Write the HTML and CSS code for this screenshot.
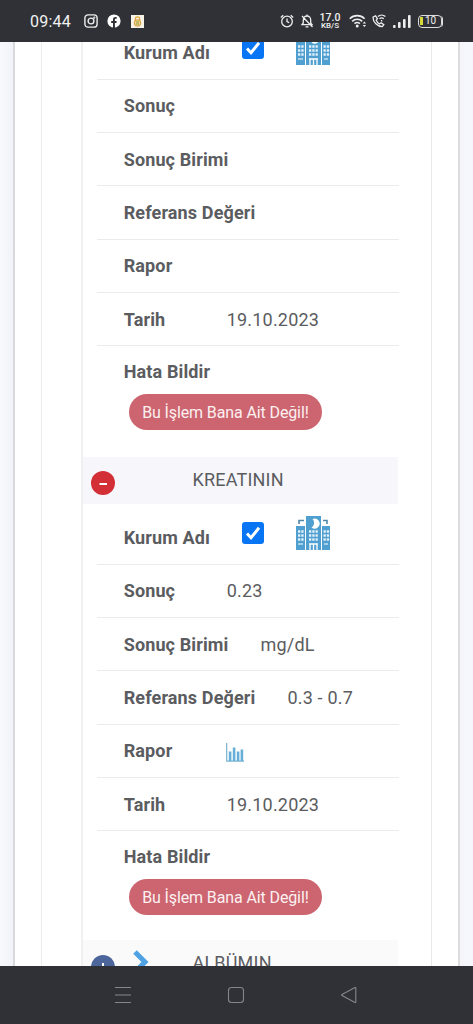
FILE: index.html
```html
<!DOCTYPE html>
<html lang="tr">
<head>
<meta charset="utf-8">
<meta name="viewport" content="width=device-width">
<title>Tahliller</title>
<link rel="stylesheet" href="styles.css">
</head>
<body>
<svg width="0" height="0" class="defs" aria-hidden="true">
  <symbol id="hospital" viewBox="0 0 36 36">
    <path fill="#4f9fd0" d="M11 1h15v34H11zM1 11h9v24H1zM27 11h8v24h-8z"/>
    <path fill="none" stroke="#4f87ab" stroke-width="1.6" d="M4 9V5.500h5M28 5.500h4V9"/>
    <path fill="#fff" d="M17.500 4a5 5 0 1 1-1 8.500a5.400 5.400 0 0 0 1-8.500z"/>
    <path stroke="#e4f1f9" stroke-width="2.600" stroke-dasharray="2.300 1" d="M14 16.500h8.800M14 20.500h8.800M14 24.500h8.800M3 16.500h6M3 20.500h6M3 24.500h6M28.500 16.500h6M28.500 20.500h6M28.500 24.500h6"/>
    <path fill="none" stroke="#fff" stroke-width="1.300" d="M15 35v-6h7V35M18.500 29v6M14 28.800h9"/>
    <path stroke="#fff" stroke-width="1" d="M3 29h5M29 29h4"/>
  </symbol>
</svg>
<div class="phone">
  <header class="status">
    <span class="clock">09:44</span>
    <svg class="ig" width="14" height="14" viewBox="0 0 14 14" fill="none" stroke="#eee" stroke-width="1.400"><rect x=".9" y=".9" width="12.200" height="12.200" rx="3.200"/><circle cx="7" cy="7" r="2.900"/><circle cx="10.300" cy="3.700" r=".4"/></svg>
    <svg class="fb" width="14" height="14" viewBox="0 0 14 14"><circle cx="7" cy="7" r="6.600" fill="#fff"/><path d="M6 14V9H4.200V7H6V5.500C6 3.800 7 3 8.400 3h1.300v1.700h-.9c-.7 0-.9.4-.9.900V7h1.800l-.3 2H7.900v5z" fill="#303136"/></svg>
    <svg class="game" width="13" height="13" viewBox="0 0 13 13"><path fill="#f7f3e6" d="M0 0h13v13H0z"/><path d="M4.300 6V4a2.200 2.200 0 0 1 4.400 0v2" fill="none" stroke="#e0a53c" stroke-width="1.200"/><circle cx="6.500" cy="8" r="3.300" fill="#f0d48c" stroke="#d69a3a" stroke-width="1"/><path d="M5 7h3M5 9h3" stroke="#8c9c45"/></svg>
    <div class="status-right">
      <svg width="14" height="14" viewBox="0 0 14 14" fill="none" stroke="#eee" stroke-width="1.300"><circle cx="7" cy="7.500" r="5.300"/><path d="M7 4.500v3.200l2.200 1M.8 3.500l2.500-2.300M13.200 3.500l-2.500-2.300"/></svg>
      <svg class="bell" width="14" height="14" viewBox="0 0 14 14" fill="none" stroke="#eee" stroke-width="1.300"><path d="M2 10.700h10L10.700 9V6c0-2.300-1.500-4-3.700-4S3.300 3.700 3.300 6v3zM5.500 12.800h3M2 2l10.500 11M7 .5V2"/></svg>
      <div class="speed"><b>17.0</b><span>KB/S</span></div>
      <svg class="wifi" width="18" height="14" viewBox="0 0 18 14" fill="none" stroke="#eee" stroke-width="1.600"><path d="M.8 4.700a10.500 10.500 0 0 1 14.800 0M3.200 7.300a7.200 7.200 0 0 1 10 0M5.500 9.700a4 4 0 0 1 5.400 0"/><circle cx="8.200" cy="12" r=".7"/><path stroke="none" fill="#eee" d="M13.700 9.500l1.700-2 1.700 2zM13.700 11l1.700 2 1.700-2z"/></svg>
      <svg class="call" width="14" height="14" viewBox="0 0 14 14" fill="none" stroke="#eee" stroke-width="1.300"><path d="M1 3.200c0 5 4.500 9.500 9.300 9.500l1.500-2-2.700-1.900-1.700 1.200C5.800 9 4.800 7.600 4.200 6.200L5.400 4.800 3.600 1.800zM5.900 2.600a5.500 5.500 0 0 1 7.500 0M7.500 4.800a3.300 3.300 0 0 1 4.300 0M9.600 6v1.500"/></svg>
      <svg class="signal" width="18" height="13" viewBox="0 0 18 13" fill="#eee"><rect x="0" y="10" width="2.600" height="3" rx="1"/><rect x="5" y="7" width="2.600" height="6" rx="1"/><rect x="10" y="4" width="2.600" height="9" rx="1"/><rect x="15" y="0" width="2.600" height="13" rx="1"/></svg>
      <div class="battery"><i></i><span>10</span></div>
    </div>
  </header>

  <main class="screen">
    <div class="card"><div class="panel"><div class="results">
      <section class="record">
        <div class="row first"><span class="label">Kurum Adı</span><span class="check"><svg viewBox="0 0 22 22"><path d="M5 11.500l4 4.300 8-10"/></svg></span><svg class="building"><use href="#hospital"/></svg></div>
        <div class="row"><span class="label">Sonuç</span></div>
        <div class="row"><span class="label">Sonuç Birimi</span></div>
        <div class="row"><span class="label">Referans Değeri</span></div>
        <div class="row"><span class="label">Rapor</span></div>
        <div class="row"><span class="label">Tarih</span><span>19.10.2023</span></div>
        <div class="report"><span class="label">Hata Bildir</span><button class="deny">Bu İşlem Bana Ait Değil!</button></div>
      </section>
      <div class="heading"><span class="toggle minus"><svg viewBox="0 0 24 24"><path d="M8.500 13h7.500"/></svg></span><span class="name">KREATININ</span></div>
      <section class="record last">
        <div class="row first"><span class="label">Kurum Adı</span><span class="check"><svg viewBox="0 0 22 22"><path d="M5 11.500l4 4.300 8-10"/></svg></span><svg class="building"><use href="#hospital"/></svg></div>
        <div class="row"><span class="label">Sonuç</span><span>0.23</span></div>
        <div class="row"><span class="label">Sonuç Birimi</span><span>mg/dL</span></div>
        <div class="row"><span class="label">Referans Değeri</span><span>0.3 - 0.7</span></div>
        <div class="row"><span class="label">Rapor</span><svg class="chart" width="19" height="19" viewBox="0 0 19 19"><path d="M.7 0v18.200H18" fill="none" stroke="#78b2d0" stroke-width="1.200"/><path d="M2.800 8.500h2.600V18H2.800zM6.800 4.500h2.600V18H6.800zM10.800 8.500h2.600V18h-2.600zM14.600 6.500h2.600V18h-2.600z" fill="#65afd8"/></svg></div>
        <div class="row"><span class="label">Tarih</span><span>19.10.2023</span></div>
        <div class="report"><span class="label">Hata Bildir</span><button class="deny">Bu İşlem Bana Ait Değil!</button></div>
      </section>
      <div class="heading light"><span class="toggle plus"><svg viewBox="0 0 24 24"><path d="M8 12h8M12 8v8"/></svg></span><svg class="chevron" width="17" height="26" viewBox="0 0 17 26"><path d="M3 3l10 10L3 23" fill="none" stroke="#4fa3e4" stroke-width="5"/></svg><span class="name">ALBÜMIN</span></div>
    </div></div></div>
  </main>

  <nav class="navbar">
    <svg width="18" height="18" viewBox="0 0 18 18"><path d="M1 1.500h16M1 9h16M1 16.500h16"/></svg>
    <svg width="18" height="18" viewBox="0 0 18 18"><rect x="1.500" y="1.500" width="15" height="15" rx="3"/></svg>
    <svg width="18" height="18" viewBox="0 0 18 18"><path d="M15.800 2v14q0 .8-.8.400L2 9.600q-.8-.6 0-1.200L15 1.600q.8-.4.800.4z"/></svg>
  </nav>
</div>
</body>
</html>
```
FILE: styles.css
```css
* { box-sizing: border-box; }
body { margin: 0; font-family: Roboto, sans-serif; font-size: 18px; letter-spacing: .2px; color: #5b5c60; }
.defs { position: absolute; }
.phone { width: 473px; height: 1024px; display: flex; flex-direction: column; overflow: hidden; }

.status { height: 42px; flex: none; background: #303136; color: #f1f1f1; display: flex; align-items: center; padding: 0 30px; letter-spacing: 0; }
.clock { width: 41px; font-size: 16px; letter-spacing: .2px; white-space: nowrap; }
.ig { margin-left: 13px; }
.fb { margin-left: 9px; }
.game { margin-left: 10px; }
.status-right { margin-left: auto; display: flex; align-items: center; margin-right: -1px; }
.bell { margin-left: 6px; }
.speed { margin-left: 6px; width: 20px; display: flex; flex-direction: column; align-items: center; line-height: 9px; }
.speed b { font-size: 10.500px; font-weight: 500; }
.speed span { font-size: 8px; font-weight: 500; line-height: 8px; }
.wifi { margin-left: 9px; }
.call { margin-left: 5px; }
.signal { margin-left: 7px; }
.battery { margin-left: 7px; margin-right: 2px; width: 24px; height: 13px; border: 1.500px solid #ddd; border-radius: 4px; display: flex; align-items: center; font-size: 10px; line-height: 10px; box-shadow: 2px 0 0 -1px #ddd; }
.battery i { width: 3px; height: 8px; background: #d9d83a; margin: 0 2px 0 1px; }

.screen { height: 924px; flex: none; overflow: hidden; background: linear-gradient(90deg, #f8f9fc, #f2f3f8 14px, #f5f5fa 458px, #f6f7fc); padding: 0 13px; }
.card { height: 924px; background: #fff; border-left: 2px solid #d9d9dd; border-right: 2px solid #dcdcde; padding: 0 26px; }
.panel { height: 924px; border-left: 1px solid #ececee; border-right: 1px solid #e9e9eb; padding-left: 39px; padding-right: 33px; }
.results { height: 924px; display: flow-root; border-left: 2px solid #f0f0f3; }

.record { height: 437.500px; padding: 0 0 0 14px; }
.record:first-child { margin-top: -23px; }
.record.last { height: 436px; }
.row { height: 53.330px; margin-right: -1px; border-bottom: 1px solid #ebebeb; display: flex; align-items: center; gap: 32px; padding-left: 26.700px; white-space: nowrap; }
.row.first { height: 60.800px; padding-top: 7px; }
.label { min-width: 71px; font-weight: 700; letter-spacing: .13px; white-space: nowrap; }
.check { width: 22px; height: 22px; border-radius: 3px; background: #0875f5; margin-top: -8px; flex: none; }
.check svg { display: block; }
.check path { fill: none; stroke: #fff; stroke-width: 3; }
.building { width: 36px; height: 36px; margin-top: -9px; margin-left: -1px; }
.chart { margin-left: -1px; margin-top: 3px; }
.report { display: flex; flex-direction: column; align-items: flex-start; padding: 15px 0 0 26.700px; }
.report .label { line-height: 21px; }
.deny { margin: 12px 0 0 5px; width: 193.500px; height: 36px; padding: 0; border: 0; border-radius: 18px; background: #cc6570; color: #fcf0f1; font: 400 16px Roboto, sans-serif; letter-spacing: -.12px; }

.heading { height: 47.500px; background: #f6f6fb; display: flex; align-items: center; position: relative; }
.heading.light { background: #fafafb; }
.toggle { width: 24px; height: 24px; border-radius: 50%; margin: 6px 0 0 7.500px; flex: none; }
.toggle svg { display: block; }
.toggle path { stroke: #fff; stroke-width: 2; fill: none; }
.minus { background: #d32f36; }
.plus { background: #4c659b; }
.chevron { position: absolute; left: 49px; top: 9px; }
.name { margin: -2px 0 0 78px; }

.navbar { height: 58px; flex: none; background: #303136; display: flex; justify-content: space-between; padding: 20px 115px 0 114px; }
.navbar svg { fill: none; stroke: #85868a; stroke-width: 1.100; }
```
